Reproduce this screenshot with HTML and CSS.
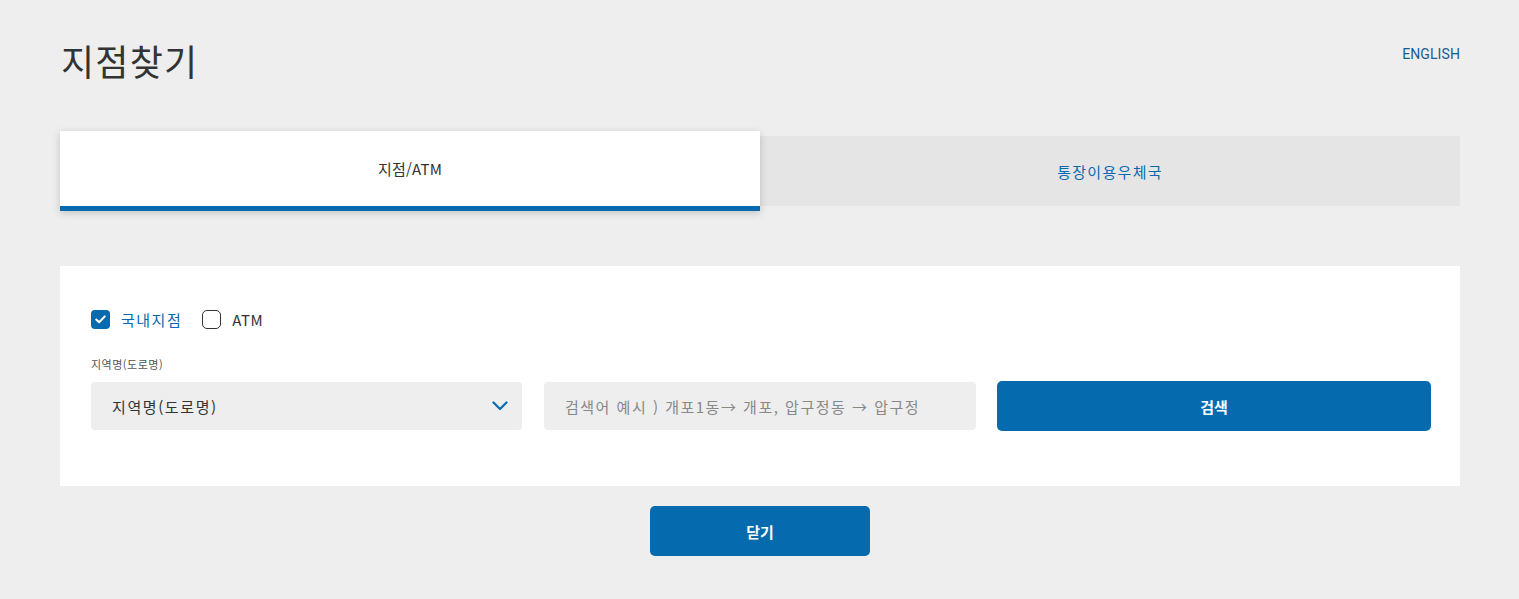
FILE: index.html
```html
<!DOCTYPE html>
<html lang="ko">
<head>
<meta charset="utf-8">
<title>지점찾기</title>
<link rel="stylesheet" href="styles.css">
</head>
<body>
<div class="page">
  <header class="header">
    <h1 class="title">지점찾기</h1>
    <a class="lang" href="#">ENGLISH</a>
  </header>

  <nav class="tabs">
    <div class="tab tab-active">지점/ATM</div>
    <div class="tab tab-idle">통장이용우체국</div>
  </nav>

  <section class="panel">
    <div class="checks">
      <label class="check check-on">
        <span class="box box-on">
          <svg width="11" height="9" viewBox="0 0 11 9"><path d="M1.2 4.6 L4.1 7.3 L9.8 1.4" fill="none" stroke="#fff" stroke-width="2" stroke-linecap="round" stroke-linejoin="round"/></svg>
        </span>
        <span class="check-text">국내지점</span>
      </label>
      <label class="check">
        <span class="box box-off"></span>
        <span class="check-text check-en">ATM</span>
      </label>
    </div>
    <div class="field-label">지역명(도로명)</div>
    <div class="form-row">
      <div class="select">
        <span class="select-text">지역명(도로명)</span>
        <svg class="chev" width="16" height="10" viewBox="0 0 16 10"><path d="M1.5 1.5 L8 8 L14.5 1.5" fill="none" stroke="#066bae" stroke-width="2.2" stroke-linecap="round" stroke-linejoin="round"/></svg>
      </div>
      <div class="input">
        <span class="placeholder">검색어 예시 ) 개포1동→ 개포, 압구정동 → 압구정</span>
      </div>
      <button class="btn btn-search">검색</button>
    </div>
  </section>

  <div class="footer">
    <button class="btn btn-close">닫기</button>
  </div>
</div>
</body>
</html>
```

FILE: styles.css
```css
html, body {
  margin: 0;
  padding: 0;
  background: #eeeeee;
}
body {
  font-family: "Noto Sans CJK KR", "Noto Sans", sans-serif;
  color: #333333;
}
.page {
  padding: 0 59px 0 60px;
}
.header {
  display: flex;
  justify-content: space-between;
  align-items: flex-start;
  padding-top: 36px;
}
.title {
  margin: 0 0 0 1px;
  font-size: 36px;
  font-weight: 400;
  line-height: 48px;
  color: #333333;
  letter-spacing: 1.2px;
}
.lang {
  margin-top: 8px;
  font-family: "Roboto", "Liberation Sans", sans-serif;
  font-size: 14px;
  line-height: 20px;
  color: #1c5a94;
  text-decoration: none;
  letter-spacing: 0.1px;
}
.tabs {
  display: flex;
  align-items: center;
  margin-top: 47px;
}
.tab {
  flex: 1;
  display: flex;
  align-items: center;
  justify-content: center;
  font-size: 15px;
  box-sizing: border-box;
  letter-spacing: 1.3px;
}
.tab-active {
  height: 80px;
  background: #ffffff;
  border-bottom: 5px solid #066bae;
  box-shadow: 0 2px 8px rgba(0, 0, 0, 0.18);
  color: #333333;
  position: relative;
  z-index: 1;
  letter-spacing: 0.2px;
}
.tab-idle {
  height: 70px;
  background: #e5e5e5;
  color: #0a6ab0;
}
.panel {
  margin-top: 55px;
  background: #ffffff;
  padding: 43px 30px 55px 31px;
}
.checks {
  display: flex;
  align-items: center;
  gap: 20px;
  height: 20px;
}
.check {
  display: flex;
  align-items: center;
  gap: 11px;
  font-size: 15px;
}
.check-on .check-text {
  color: #066bae;
}
.check-text {
  color: #333333;
  letter-spacing: 1.5px;
}
.check-en {
  letter-spacing: 0.5px;
}
.box {
  width: 19px;
  height: 19px;
  box-sizing: border-box;
  border-radius: 4px;
  display: flex;
  align-items: center;
  justify-content: center;
}
.box-on {
  background: #066bae;
}
.box-off {
  border: 1.5px solid #333333;
  border-radius: 5px;
}
.field-label {
  margin-top: 27px;
  font-size: 11px;
  line-height: 16px;
  color: #555555;
  letter-spacing: 0.5px;
}
.form-row {
  margin-top: 9px;
  display: grid;
  grid-template-columns: 431px 432px 433px;
  column-gap: 22px;
  align-items: center;
}
.select, .input {
  height: 48px;
  background: #eeeeee;
  border-radius: 4px;
  display: flex;
  align-items: center;
  box-sizing: border-box;
}
.select {
  justify-content: space-between;
  padding: 0 14px 0 21px;
}
.select-text {
  font-size: 15px;
  color: #333333;
  letter-spacing: 1.6px;
}
.input {
  padding-left: 21px;
}
.placeholder {
  font-size: 15px;
  color: #888888;
  letter-spacing: 1.5px;
  white-space: nowrap;
}
.btn {
  border: none;
  background: #066bae;
  color: #ffffff;
  font-family: "Noto Sans CJK KR", sans-serif;
  font-weight: 700;
  font-size: 15px;
  border-radius: 5px;
  cursor: pointer;
}
.btn-search {
  height: 50px;
  margin-left: -1px;
}
.footer {
  display: flex;
  justify-content: center;
  margin-top: 20px;
}
.btn-close {
  width: 220px;
  height: 50px;
}
```
